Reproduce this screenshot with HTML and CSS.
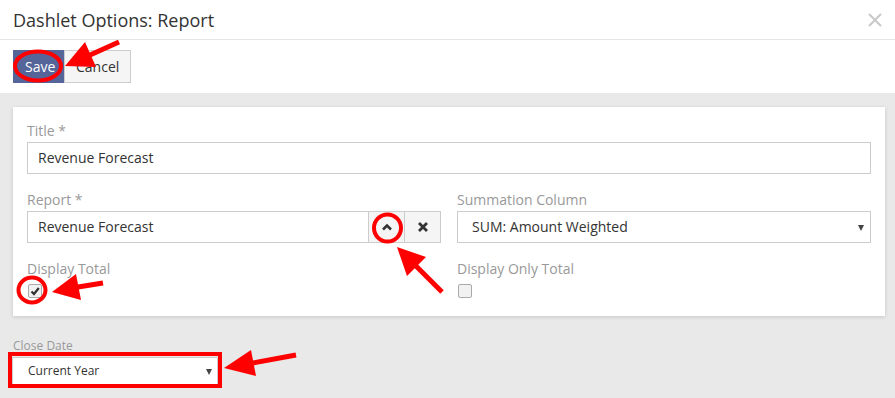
FILE: index.html
```html
<!DOCTYPE html>
<html>
<head>
    <meta charset="utf-8" />
    <title>Dashlet Options</title>
    <link rel="stylesheet" href="styles.css">
</head>
<body>
    <div class="modal-header">
        <h3 class="modal-title">Dashlet Options: Report</h3>
        <svg class="close" width="14" height="14" viewBox="0 0 14 14"><path d="M1 1L13 13M13 1L1 13" stroke="#c8c8c8" stroke-width="2"/></svg>
    </div>
    <div class="toolbar">
        <button class="btn btn-primary">Save</button><button class="btn">Cancel</button>
    </div>
    <div class="content">
        <div class="card">
            <div class="field">
                <label>Title *</label>
                <div class="input">Revenue Forecast</div>
            </div>
            <div class="row">
                <div class="field">
                    <label>Report *</label>
                    <div class="input-group">
                        <div class="input">Revenue Forecast</div>
                        <span class="addon">
                            <svg width="12" height="8" viewBox="0 0 12 8"><path d="M2 6.5L6 2.5L10 6.5" fill="none" stroke="#333" stroke-width="2.6"/></svg>
                        </span>
                        <span class="addon">
                            <svg width="12" height="12" viewBox="0 0 12 12"><path d="M2 2L10 10M10 2L2 10" stroke="#333" stroke-width="2.8"/></svg>
                        </span>
                    </div>
                </div>
                <div class="field">
                    <label>Summation Column</label>
                    <div class="input select">SUM: Amount Weighted</div>
                </div>
            </div>
            <div class="row">
                <div class="field last">
                    <label>Display Total</label>
                    <span class="checkbox">
                        <svg width="10" height="10" viewBox="0 0 10 10"><path d="M1.5 5.5L4 8L8.8 2" fill="none" stroke="#333" stroke-width="2.2"/></svg>
                    </span>
                </div>
                <div class="field last">
                    <label>Display Only Total</label>
                    <span class="checkbox"></span>
                </div>
            </div>
        </div>
        <div class="filter">
            <label>Close Date</label>
            <div class="input select small">Current Year</div>
        </div>
    </div>

    <svg class="marks" width="895" height="398" viewBox="0 0 895 398">
        <g fill="none" stroke="#f00" stroke-width="4">
            <ellipse cx="38" cy="66" rx="23" ry="14.5"/>
            <circle cx="387.5" cy="228" r="13.5"/>
            <ellipse cx="32" cy="290" rx="13.5" ry="12.5"/>
            <rect x="10" y="354" width="210" height="32"/>
        </g>
        <g stroke="#f00" stroke-width="5">
            <line x1="119" y1="42" x2="90" y2="55"/>
            <line x1="442" y1="292" x2="416" y2="266"/>
            <line x1="103" y1="283" x2="78" y2="287"/>
            <line x1="296" y1="355" x2="253" y2="363"/>
        </g>
        <g fill="#f00">
            <polygon points="65,66 96,67 85,42"/>
            <polygon points="397,247 426,257 407,276"/>
            <polygon points="52,292 81,300 76,274"/>
            <polygon points="224,368 256,376 251,350"/>
        </g>
    </svg>
</body>
</html>
```

FILE: styles.css
```css
body {
    margin: 0;
    width: 895px;
    height: 398px;
    overflow: hidden;
    font-family: "Open Sans", "Liberation Sans", sans-serif;
    color: #333;
    background: #e9e9e9;
    position: relative;
}

.modal-header {
    height: 39px;
    background: #fff;
    border-bottom: 1px solid #e5e5e5;
    padding: 0 13px;
    display: flex;
    align-items: center;
    justify-content: space-between;
}

.modal-title {
    margin: 0;
    font-size: 18px;
    font-weight: normal;
    color: #333;
}

.toolbar {
    background: #fff;
    padding: 10px 13px;
    display: flex;
}

.btn {
    height: 33px;
    padding: 0 11px;
    font-family: inherit;
    font-size: 14px;
    color: #333;
    background: #f5f5f5;
    border: 1px solid #ccc;
    margin: 0;
}

.btn-primary {
    width: 51px;
    color: #fff;
    background: #55659a;
    border-color: #55659a;
}

.content {
    padding: 14px 10px 0 13px;
}

.card {
    background: #fff;
    box-shadow: 0 1px 4px rgba(0, 0, 0, 0.15);
    padding: 14px 14px 18px 14px;
}

.row {
    display: flex;
    gap: 16px;
}

.row .field {
    flex: 1;
}

.field {
    margin-bottom: 16px;
}

.field.last {
    margin-bottom: 0;
}

label {
    display: block;
    font-size: 14px;
    line-height: 20px;
    color: #999;
    margin-bottom: 1px;
}

.input {
    height: 32px;
    box-sizing: border-box;
    border: 1px solid #ccc;
    background: #fff;
    padding: 0 10px;
    font-size: 14px;
    line-height: 30px;
    color: #333;
    position: relative;
}

.input-group {
    display: flex;
}

.input-group .input {
    flex: 1;
}

.addon {
    width: 36px;
    height: 32px;
    box-sizing: border-box;
    border: 1px solid #ccc;
    border-left: 0;
    background: #f5f5f5;
    display: flex;
    align-items: center;
    justify-content: center;
}

.select {
    padding-left: 14px;
}

.select::after {
    content: "";
    position: absolute;
    right: 6px;
    top: 13px;
    border-left: 3px solid transparent;
    border-right: 3px solid transparent;
    border-top: 6px solid #444;
}

.checkbox {
    display: flex;
    align-items: center;
    justify-content: center;
    width: 12px;
    height: 12px;
    margin: 5px 0 0 1px;
    border: 1px solid #aaa;
    border-radius: 2px;
    background: #f1f1f1;
}

.filter {
    padding-top: 22px;
}

.filter label {
    font-size: 12px;
    line-height: 16px;
    margin-bottom: 3px;
}

.input.small {
    width: 206px;
    margin-left: -1px;
    height: 28px;
    line-height: 26px;
    font-size: 12px;
    padding-left: 15px;
}

.input.small::after {
    top: 11px;
    right: 5px;
}

.marks {
    position: absolute;
    left: 0;
    top: 0;
    pointer-events: none;
}
```
